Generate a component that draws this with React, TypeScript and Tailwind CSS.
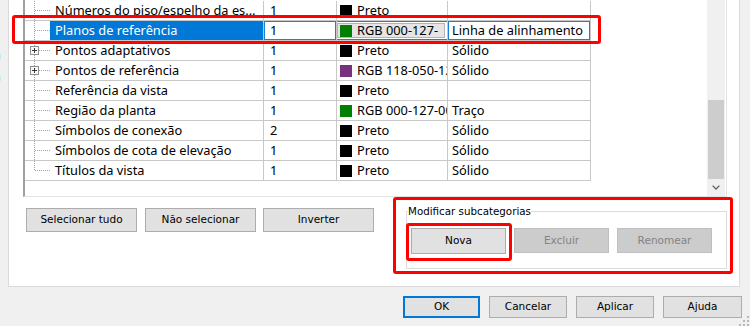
import React from "react";

type Row = {
  name: string;
  w: string;
  color: string;
  colorName: string;
  pattern: string;
  selected?: boolean;
  plus?: boolean;
  last?: boolean;
};

const rows: Row[] = [
  { name: "Números do piso/espelho da es...", w: "1", color: "#000000", colorName: "Preto", pattern: "" },
  { name: "Planos de referência", w: "1", color: "#007f00", colorName: "RGB 000-127-", pattern: "Linha de alinhamento", selected: true },
  { name: "Pontos adaptativos", w: "1", color: "#000000", colorName: "Preto", pattern: "Sólido", plus: true },
  { name: "Pontos de referência", w: "1", color: "#76327f", colorName: "RGB 118-050-128", pattern: "Sólido", plus: true },
  { name: "Referência da vista", w: "1", color: "#000000", colorName: "Preto", pattern: "" },
  { name: "Região da planta", w: "1", color: "#007f00", colorName: "RGB 000-127-000", pattern: "Traço" },
  { name: "Símbolos de conexão", w: "2", color: "#000000", colorName: "Preto", pattern: "Sólido" },
  { name: "Símbolos de cota de elevação", w: "1", color: "#000000", colorName: "Preto", pattern: "Sólido" },
  { name: "Títulos da vista", w: "1", color: "#000000", colorName: "Preto", pattern: "Sólido", last: true },
];

function Tree({ plus, last }: { plus?: boolean; last?: boolean }) {
  return (
    <svg width="25" height="19" className="shrink-0 block">
      <line x1="9.5" y1="0" x2="9.5" y2={last ? 10 : 19} stroke="#a0a0a0" strokeDasharray="1 1" />
      <line x1="10" y1="9.5" x2="25" y2="9.5" stroke="#a0a0a0" strokeDasharray="1 1" />
      {plus && (
        <g>
          <rect x="5.5" y="5.5" width="8" height="8" fill="#f7f7f7" stroke="#8f8f8f" />
          <line x1="7" y1="9.5" x2="12" y2="9.5" stroke="#3a3a3a" />
          <line x1="9.5" y1="7" x2="9.5" y2="12" stroke="#3a3a3a" />
        </g>
      )}
    </svg>
  );
}

function Swatch({ color }: { color: string }) {
  return <span className="inline-block w-[12px] h-[12px] shrink-0" style={{ backgroundColor: color }} />;
}

function TableRow({ r }: { r: Row }) {
  return (
    <div className="flex h-[20px] w-[566px] border-b border-[#c8c8c8] text-[12.8px] leading-[19px] whitespace-nowrap">
      <div className="w-[239px] shrink-0 flex border-r border-[#c8c8c8]">
        <Tree plus={r.plus} last={r.last} />
        <div
          className={
            r.selected
              ? "flex-1 overflow-hidden pl-[5px] bg-[#0078d7] text-white"
              : "flex-1 overflow-hidden pl-[5px]"
          }
        >
          {r.name}
        </div>
      </div>
      <div className="w-[73px] shrink-0 border-r border-[#c8c8c8]">
        {r.selected ? (
          <div className="h-full border border-[#1a7fd6] pl-[5px] leading-[17px]">{r.w}</div>
        ) : (
          <div className="pl-[6px]">{r.w}</div>
        )}
      </div>
      <div className="w-[111px] shrink-0 border-r border-[#c8c8c8] overflow-hidden">
        {r.selected ? (
          <div className="h-full border-y border-[#1a7fd6] py-[1px]">
            <div className="h-full mr-[2px] bg-[#e5e5e5] border border-[#b4b4b4] flex items-center gap-[5px] pl-[2px] overflow-hidden leading-[15px]">
              <Swatch color={r.color} />
              <span className="flex-1 min-w-0 overflow-hidden">{r.colorName}</span>
            </div>
          </div>
        ) : (
          <div className="h-full flex items-center gap-[5px] pl-[3px]">
            <Swatch color={r.color} />
            <span className="flex-1 min-w-0 overflow-hidden">{r.colorName}</span>
          </div>
        )}
      </div>
      <div className="w-[143px] shrink-0 border-r border-[#c8c8c8] overflow-hidden">
        {r.selected ? (
          <div className="h-full border border-[#1a7fd6] pl-[3px] leading-[17px]">{r.pattern}</div>
        ) : (
          <div className="pl-[4px]">{r.pattern}</div>
        )}
      </div>
    </div>
  );
}

function Btn({
  children,
  className = "",
  disabled,
}: {
  children: React.ReactNode;
  className?: string;
  disabled?: boolean;
}) {
  return (
    <div
      className={
        (disabled
          ? "bg-[#cccccc] border border-[#bfbfbf] text-[#838383] "
          : "bg-[#e1e1e1] border border-[#adadad] text-black ") +
        "shrink-0 flex items-center justify-center font-['DejaVu_Sans',sans-serif] text-[10.5px] " +
        className
      }
    >
      {children}
    </div>
  );
}

export default function App() {
  return (
    <div className="relative w-[750px] h-[326px] overflow-hidden bg-[#f0f0f0] font-['Noto_Sans',sans-serif] text-black">
      <div className="flex h-[287px]">
        <div className="w-[8px] shrink-0 overflow-hidden pt-[44px] text-[12px] leading-[22px]">
          <div className="-ml-[6px]">a</div>
          <div className="-ml-[6px]">a</div>
        </div>
        <div className="w-[732px] shrink-0 bg-white border-x border-b border-[#dadada] flex flex-col">
          <div className="ml-[14px] w-[704px] h-[197px] shrink-0 flex border-l-2 border-l-[#a0a0a0] border-r border-r-[#e3e3e3] border-b border-b-[#e3e3e3]">
            <div className="w-[682px] shrink-0 pt-[1px]">
              {rows.map((r) => (
                <TableRow key={r.name} r={r} />
              ))}
            </div>
            <div className="w-[18px] shrink-0 bg-[#f0f0f0] flex flex-col">
              <div className="h-[100px]" />
              <div className="h-[79px] mx-[1px] bg-[#cdcdcd]" />
              <div className="flex-1 flex items-center justify-center">
                <svg width="8" height="5" className="block">
                  <path d="M0.6 0.6 L4 4 L7.4 0.6" fill="none" stroke="#606060" strokeWidth="1.3" />
                </svg>
              </div>
            </div>
          </div>
          <div className="flex items-start mt-[7px] pl-[17px]">
            <div className="flex mt-[4px]">
              <Btn className="w-[111px] h-[24px]">Selecionar tudo</Btn>
              <Btn className="w-[111px] h-[24px] ml-[8px]">Não selecionar</Btn>
              <Btn className="w-[111px] h-[24px] ml-[7px]">Inverter</Btn>
            </div>
            <fieldset className="ml-[32px] w-[321px] h-[65px] border border-[#dcdcdc] m-0 px-[4px] pb-0 pt-0 min-w-0">
              <legend className="-ml-[3px] px-0 font-['DejaVu_Sans',sans-serif] text-[10.3px] leading-[14px]">
                Modificar subcategorias
              </legend>
              <div className="flex gap-[8px] mt-[10px]">
                <Btn className="w-[95px] h-[26px]">Nova</Btn>
                <Btn className="w-[95px] h-[25px]" disabled>
                  Excluir
                </Btn>
                <Btn className="w-[95px] h-[25px]" disabled>
                  Renomear
                </Btn>
              </div>
            </fieldset>
          </div>
        </div>
      </div>
      <div className="flex mt-[9px]">
        <div className="w-[8px] shrink-0 overflow-hidden text-[12px] leading-[22px]">
          <div className="-ml-[5px]">l</div>
        </div>
        <div className="flex-1 flex justify-end gap-[9px] pr-[8px]">
          <Btn className="w-[77px] h-[22px] !border-2 !border-[#0078d7]">OK</Btn>
          <Btn className="w-[78px] h-[22px]">Cancelar</Btn>
          <Btn className="w-[78px] h-[22px]">Aplicar</Btn>
          <Btn className="w-[79px] h-[22px]">Ajuda</Btn>
        </div>
      </div>

      <svg width="12" height="12" className="absolute right-0 bottom-0">
        <rect x="9" y="2" width="2" height="2" fill="#b9b9b9" />
        <rect x="9" y="6" width="2" height="2" fill="#b9b9b9" />
        <rect x="5" y="6" width="2" height="2" fill="#b9b9b9" />
        <rect x="9" y="10" width="2" height="2" fill="#b9b9b9" />
        <rect x="5" y="10" width="2" height="2" fill="#b9b9b9" />
        <rect x="1" y="10" width="2" height="2" fill="#b9b9b9" />
      </svg>

      <div className="absolute left-[12px] top-[15px] w-[589px] h-[29px] border-[3px] border-[#f00] rounded-[3px]" />
      <div className="absolute left-[393px] top-[197px] w-[340px] h-[77px] border-[3px] border-[#f00] rounded-[3px]" />
      <div className="absolute left-[406px] top-[223px] w-[106px] h-[38px] border-[3px] border-[#f00] rounded-[3px]" />
    </div>
  );
}
